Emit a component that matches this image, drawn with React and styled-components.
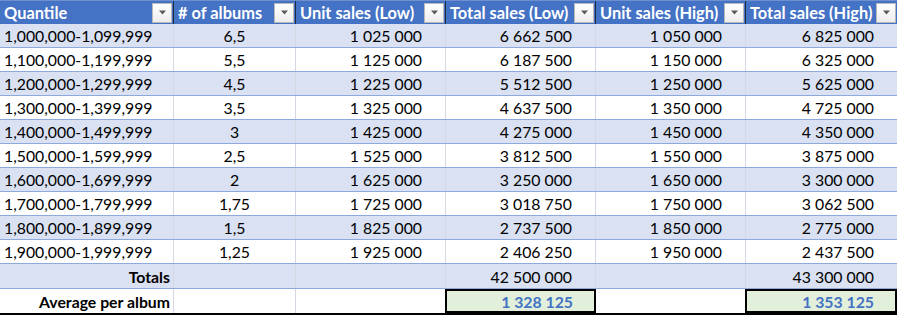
import React from "react";
import styled, { createGlobalStyle } from "styled-components";

const Global = createGlobalStyle`
  html, body { margin: 0; padding: 0; background: #ffffff; }
  body { font-family: "Lato", "Open Sans", sans-serif; }
`;

const COLS = "174px 122px 150px 150px 150px 151px";

const Sheet = styled.div`
  width: 897px;
  display: flex;
  flex-direction: column;
  font-family: "Lato", "Open Sans", sans-serif;
  font-size: 15.8px;
  color: #000;
`;

const Row = styled.div`
  display: grid;
  grid-template-columns: ${COLS};
  height: ${(p) => p.$h || 24}px;
  box-sizing: border-box;
  background: ${(p) => p.$bg || "#ffffff"};
  border-bottom: ${(p) => p.$bottom || "1px solid #8ea9db"};
`;

const HeaderRow = styled.div`
  display: grid;
  grid-template-columns: ${COLS};
  height: 24px;
  background: #4472c4;
  border-top: 1px solid #6f8fcf;
  box-sizing: border-box;
`;

const HeadCell = styled.div`
  display: flex;
  align-items: center;
  min-width: 0;
  padding-left: 4px;
  padding-right: 1px;
  border-right: 1px solid #1f2a3c;
  color: #ffffff;
  font-weight: 700;
  font-size: 16.4px;
  &:last-child { border-right: none; }
`;

const HeadText = styled.span`
  flex: 1;
  min-width: 0;
  overflow: hidden;
  white-space: nowrap;
`;

const DropButton = styled.div`
  flex-shrink: 0;
  width: 20px;
  height: 20px;
  box-sizing: border-box;
  border: 1px solid #b8b8b8;
  background: linear-gradient(#ffffff, #ededed);
  display: flex;
  align-items: center;
  justify-content: center;
`;

const Cell = styled.div`
  display: flex;
  align-items: center;
  justify-content: ${(p) =>
    p.$align === "center" ? "center" : p.$align === "right" ? "flex-end" : "flex-start"};
  padding: ${(p) => (p.$align === "right" ? "0 23px 0 0" : p.$align === "left" ? "0 0 0 4px" : "0")};
  padding-right: ${(p) => (p.$label ? "3px" : undefined)};
  border-right: 1px solid #d4d8e2;
  white-space: nowrap;
  overflow: hidden;
  font-weight: ${(p) => (p.$bold ? 700 : 400)};
  &:last-child { border-right: none; }
`;

const AvgCell = styled.div`
  display: flex;
  align-items: center;
  justify-content: flex-end;
  padding-right: 21px;
  margin-left: -1px;
  box-sizing: border-box;
  background: #e2efda;
  border: 2px solid #000;
  color: #4472c4;
  font-weight: 700;
  white-space: nowrap;
`;

const Caret = () => (
  <svg width="9" height="5" viewBox="0 0 9 5">
    <path d="M1 0.5h7L4.5 4.5z" fill="#5a5a5a" />
  </svg>
);

const headers = [
  "Quantile",
  "# of albums",
  "Unit sales (Low)",
  "Total sales (Low)",
  "Unit sales (High)",
  "Total sales (High)",
];

const data = [
  ["1,000,000-1,099,999", "6,5", "1 025 000", "6 662 500", "1 050 000", "6 825 000"],
  ["1,100,000-1,199,999", "5,5", "1 125 000", "6 187 500", "1 150 000", "6 325 000"],
  ["1,200,000-1,299,999", "4,5", "1 225 000", "5 512 500", "1 250 000", "5 625 000"],
  ["1,300,000-1,399,999", "3,5", "1 325 000", "4 637 500", "1 350 000", "4 725 000"],
  ["1,400,000-1,499,999", "3", "1 425 000", "4 275 000", "1 450 000", "4 350 000"],
  ["1,500,000-1,599,999", "2,5", "1 525 000", "3 812 500", "1 550 000", "3 875 000"],
  ["1,600,000-1,699,999", "2", "1 625 000", "3 250 000", "1 650 000", "3 300 000"],
  ["1,700,000-1,799,999", "1,75", "1 725 000", "3 018 750", "1 750 000", "3 062 500"],
  ["1,800,000-1,899,999", "1,5", "1 825 000", "2 737 500", "1 850 000", "2 775 000"],
  ["1,900,000-1,999,999", "1,25", "1 925 000", "2 406 250", "1 950 000", "2 437 500"],
];

const aligns = ["left", "center", "right", "right", "right", "right"];

export default function App() {
  return (
    <>
      <Global />
      <Sheet>
        <HeaderRow>
          {headers.map((h) => (
            <HeadCell key={h}>
              <HeadText>{h}</HeadText>
              <DropButton>
                <Caret />
              </DropButton>
            </HeadCell>
          ))}
        </HeaderRow>
        {data.map((r, i) => (
          <Row key={r[0]} $bg={i % 2 === 0 ? "#d9e1f2" : "#ffffff"}>
            {r.map((v, j) => (
              <Cell key={j} $align={aligns[j]}>
                {v}
              </Cell>
            ))}
          </Row>
        ))}
        <Row $bg="#d9e1f2" $h={25}>
          <Cell $align="right" $label $bold>Totals</Cell>
          <Cell />
          <Cell />
          <Cell $align="right">42 500 000</Cell>
          <Cell />
          <Cell $align="right">43 300 000</Cell>
        </Row>
        <Row $h={26} $bottom="2px solid #000">
          <Cell $align="right" $label $bold>Average per album</Cell>
          <Cell />
          <Cell />
          <AvgCell>1 328 125</AvgCell>
          <Cell />
          <AvgCell>1 353 125</AvgCell>
        </Row>
      </Sheet>
    </>
  );
}
